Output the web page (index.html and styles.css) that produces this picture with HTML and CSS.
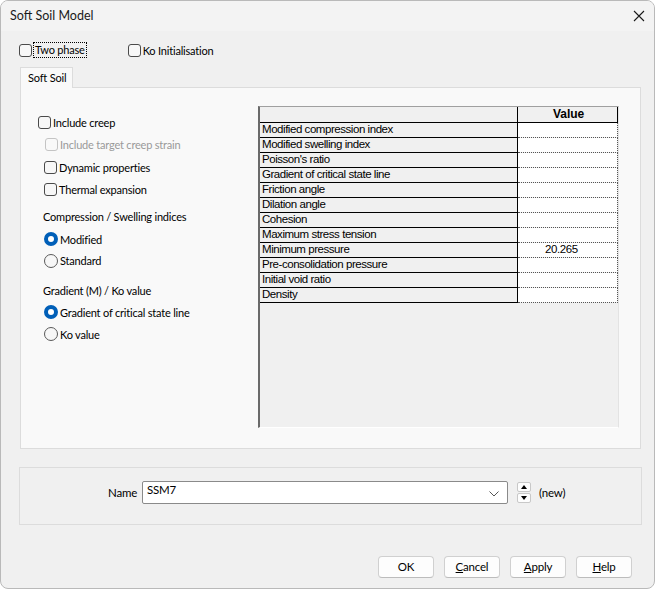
FILE: index.html
```html
<!DOCTYPE html>
<html>
<head>
<meta charset="utf-8">
<link rel="stylesheet" href="styles.css">
</head>
<body>
<div class="window">
  <div class="titlebar">
    <span class="title">Soft Soil Model</span>
    <svg class="close" width="12" height="12" viewBox="0 0 12 12"><path d="M1 1L11 11M11 1L1 11" stroke="#1a1a1a" stroke-width="1.1" fill="none"/></svg>
  </div>
  <div class="toprow">
    <label class="chk"><span class="box"></span><span class="focus">Two phase</span></label>
    <label class="chk ko"><span class="box"></span><span>Ko Initialisation</span></label>
  </div>
  <div class="tabs"><div class="tab">Soft Soil</div></div>
  <div class="panel">
    <div class="leftcol">
      <div class="row r-creep"><span class="box"></span><span>Include creep</span></div>
      <div class="row r-target disabled"><span class="box"></span><span>Include target creep strain</span></div>
      <div class="row r-ind r-dyn"><span class="box"></span><span>Dynamic properties</span></div>
      <div class="row r-ind"><span class="box"></span><span>Thermal expansion</span></div>
      <div class="row r-label r-comp">Compression / Swelling indices</div>
      <div class="row r-ind r-mod"><span class="radio on"></span><span>Modified</span></div>
      <div class="row r-ind r-std"><span class="radio"></span><span>Standard</span></div>
      <div class="row r-label r-grad">Gradient (M) / Ko value</div>
      <div class="row r-ind"><span class="radio on"></span><span>Gradient of critical state line</span></div>
      <div class="row r-ind"><span class="radio"></span><span>Ko value</span></div>
    </div>
    <div class="grid">
      <table>
        <tr class="head"><th class="c1"></th><th class="c2">Value</th></tr>
        <tr><td class="c1">Modified compression index</td><td class="c2"></td></tr>
        <tr><td class="c1">Modified swelling index</td><td class="c2"></td></tr>
        <tr><td class="c1">Poisson's ratio</td><td class="c2"></td></tr>
        <tr><td class="c1">Gradient of critical state line</td><td class="c2"></td></tr>
        <tr><td class="c1">Friction angle</td><td class="c2"></td></tr>
        <tr><td class="c1">Dilation angle</td><td class="c2"></td></tr>
        <tr><td class="c1">Cohesion</td><td class="c2"></td></tr>
        <tr><td class="c1">Maximum stress tension</td><td class="c2"></td></tr>
        <tr><td class="c1">Minimum pressure</td><td class="c2 val">20.265</td></tr>
        <tr><td class="c1">Pre-consolidation pressure</td><td class="c2"></td></tr>
        <tr><td class="c1">Initial void ratio</td><td class="c2"></td></tr>
        <tr><td class="c1">Density</td><td class="c2"></td></tr>
      </table>
    </div>
  </div>
  <div class="namegroup">
    <div class="namerow">
      <span class="namelabel">Name</span>
      <div class="combo">
        <span class="combotext">SSM7</span>
        <svg class="chev" width="10" height="6" viewBox="0 0 10 6"><path d="M0.5 0.5L5 5L9.5 0.5" stroke="#555" stroke-width="1" fill="none"/></svg>
      </div>
      <div class="spin">
        <div class="spinbtn"><svg width="6" height="4" viewBox="0 0 6 4"><path d="M0 4L3 0L6 4Z" fill="#000"/></svg></div>
        <div class="spinbtn"><svg width="6" height="4" viewBox="0 0 6 4"><path d="M0 0L6 0L3 4Z" fill="#000"/></svg></div>
      </div>
      <span class="newtxt">(new)</span>
    </div>
  </div>
  <div class="buttons">
    <button class="btn">OK</button>
    <button class="btn"><u>C</u>ancel</button>
    <button class="btn"><u>A</u>pply</button>
    <button class="btn"><u>H</u>elp</button>
  </div>
</div>
</body>
</html>
```

FILE: styles.css
```css
* { box-sizing: border-box; }
html, body { margin: 0; padding: 0; background: #ffffff; }
body {
  font-family: Lato, "Noto Sans", sans-serif;
  font-size: 11px;
  letter-spacing: -0.2px;
  color: #000;
}
.window {
  width: 655px;
  height: 589px;
  border: 1px solid #b9b9b9;
  border-radius: 8px;
  background: #f0f0f0;
  overflow: hidden;
}
.titlebar {
  height: 30px;
  background: #f3f3f3;
  display: flex;
  align-items: center;
  justify-content: space-between;
  padding: 0 9px 1px 9px;
}
.title { color: #1a1a1a; font-size: 12.5px; letter-spacing: 0; }
.close { margin-top: 1px; }

.toprow {
  display: flex;
  align-items: center;
  height: 16px;
  margin-top: 11px;
  padding-left: 18px;
}
.chk { display: flex; align-items: center; gap: 2px; }
.chk.ko { margin-left: 42px; }
.focus { outline: 1px dotted #000; outline-offset: 0px; padding: 0 1px; line-height: 14px; }

.box {
  width: 13px;
  height: 13px;
  border: 1px solid #4a4a4a;
  border-radius: 3px;
  background: #f7f7f7;
  flex: none;
}
.radio {
  width: 14px;
  height: 14px;
  border: 1px solid #5a5a5a;
  border-radius: 50%;
  background: #f7f7f7;
  flex: none;
}
.radio.on {
  border: 4px solid #005fb8;
  background: #ffffff;
}

.tabs { display: flex; padding-left: 19px; margin-top: 9px; }
.tab {
  height: 21px;
  width: 53px;
  border: 1px solid #dcdcdc;
  border-bottom: none;
  background: #f9f9f9;
  padding-left: 7px;
  line-height: 19px;
  white-space: nowrap;
  margin-bottom: -1px;
  position: relative;
  z-index: 1;
}
.panel {
  margin-left: 19px;
  width: 621px;
  height: 362px;
  border: 1px solid #dcdcdc;
  background: #f9f9f9;
  display: flex;
}
.leftcol {
  width: 237px;
  padding-left: 17px;
  padding-top: 23px;
  flex: none;
  white-space: nowrap;
}
.row {
  display: flex;
  align-items: center;
  gap: 2px;
  height: 22px;
}
.row.r-target { padding-left: 7px; }
.row.disabled { color: #9a9a9a; }
.row.disabled .box { border-color: #c4c4c4; background: #f9f9f9; }
.row.r-ind { padding-left: 6px; }
.row.r-dyn { margin-top: 1px; }
.row.r-label { padding-left: 5px; }
.row.r-comp { margin-top: 5px; }
.row.r-mod { margin-top: 1px; }
.row.r-std { height: 21px; }
.row.r-grad { margin-top: 8px; }

.grid {
  margin-top: 18px;
  width: 361px;
  height: 322px;
  background: #f0f0f0;
  border-top: 1px solid #a0a0a0;
  border-left: 2px solid #6a6a6a;
  border-right: 1px solid #e3e3e3;
  border-bottom: 1px solid #ffffff;
  flex: none;
}
.grid table {
  border-collapse: collapse;
  font-family: "Liberation Sans", Arial, sans-serif;
  font-size: 11.5px;
  letter-spacing: -0.45px;
  table-layout: fixed;
}
.grid td, .grid th {
  height: 15px;
  padding: 0 0 0 2px;
  line-height: 13px;
  white-space: nowrap;
  overflow: hidden;
}
.grid .c1 {
  width: 258px;
  background: #f0f0f0;
  border-right: 1px solid #000;
  border-bottom: 1px solid #000;
  text-align: left;
}
.grid .c2 {
  width: 100px;
  background: #fff;
  border-right: 1px dotted #555;
  border-bottom: 1px dotted #555;
}
.grid .head th {
  background: #f0f0f0;
  border-right: 1px solid #000;
  border-bottom: 1px solid #000;
  font-weight: bold;
  font-size: 12px;
  letter-spacing: 0;
}
.grid .head th.c2 { text-align: center; border-left: 1px solid #000; }
.grid td.val { padding-left: 27px; }

.namegroup {
  margin-top: 18px;
  margin-left: 18px;
  width: 623px;
  height: 58px;
  border: 1px solid #dcdcdc;
  padding-left: 88px;
  padding-top: 13px;
}
.namerow {
  display: flex;
  align-items: center;
  font-size: 11.5px;
}
.namelabel { width: 34px; flex: none; }
.combo {
  width: 366px;
  height: 23px;
  background: #fff;
  border: 1px solid #8a8a8a;
  border-radius: 2px;
  display: flex;
  align-items: flex-start;
  justify-content: space-between;
  padding: 1px 8px 0 4px;
}
.combotext { line-height: 14px; }
.chev { margin-top: 8px; }
.spin {
  margin-left: 9px;
  width: 14px;
  display: flex;
  flex-direction: column;
  gap: 1px;
}
.spinbtn {
  height: 10px;
  border: 1px solid #c8c8c8;
  border-radius: 2px;
  background: #fdfdfd;
  display: flex;
  align-items: center;
  justify-content: center;
}
.newtxt { margin-left: 8px; }

.buttons {
  display: flex;
  justify-content: flex-end;
  gap: 10px;
  margin-top: 31px;
  padding-right: 22px;
}
.btn {
  width: 56px;
  height: 22px;
  background: #fdfdfd;
  border: 1px solid #d0d0d0;
  border-bottom-color: #bcbcbc;
  border-radius: 4px;
  font-family: Lato, "Noto Sans", sans-serif;
  font-size: 11.5px;
  letter-spacing: -0.2px;
  color: #000;
  padding: 0;
  line-height: 18px;
}
```
